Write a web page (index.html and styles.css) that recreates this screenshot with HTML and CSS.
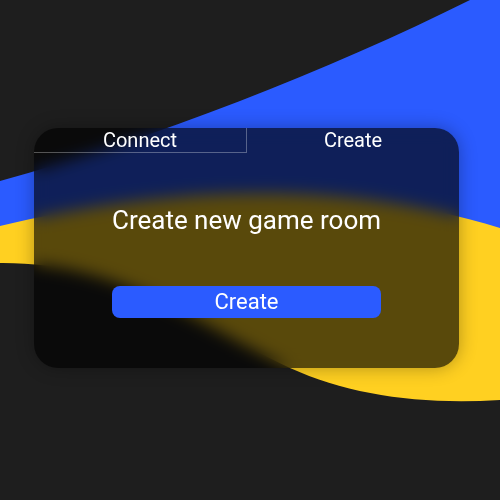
FILE: index.html
```html
<!DOCTYPE html>
<html lang="en">
<head>
<meta charset="utf-8">
<title>Game room</title>
<link rel="stylesheet" href="styles.css">
</head>
<body>
<svg class="backdrop" viewBox="0 0 500 500" preserveAspectRatio="none" aria-hidden="true">
  <path class="wave-blue" d="M0,181 C150,140 330,70 470,0 L500,0 L500,250 L0,250 Z"/>
  <path class="wave-yellow" d="M0,226 C150,190 330,175 500,228 L500,400 C420,405 350,395 290,368 C190,320 120,262 0,263 Z"/>
</svg>
<main class="page">
  <section class="card">
    <nav class="tabs">
      <button class="tab tab-inactive">Connect</button>
      <button class="tab tab-active">Create</button>
    </nav>
    <div class="card-body">
      <h1 class="title">Create new game room</h1>
      <button class="primary">Create</button>
    </div>
  </section>
</main>
</body>
</html>
```

FILE: styles.css
```css
html, body {
  margin: 0;
  padding: 0;
  height: 100%;
}
body {
  background: #1e1e1e;
  font-family: Roboto, "Liberation Sans", sans-serif;
  color: #fff;
  overflow: hidden;
}
.backdrop {
  position: fixed;
  top: 0;
  left: 0;
  width: 500px;
  height: 500px;
  z-index: 0;
}
.wave-blue { fill: #2b5bff; }
.wave-yellow { fill: #ffd021; }
.page {
  position: relative;
  z-index: 1;
  padding: 128px 0 0 34px;
}
.card {
  width: 425px;
  height: 240px;
  box-sizing: border-box;
  border-radius: 24px;
  overflow: hidden;
  background: rgba(0, 0, 0, 0.65);
  -webkit-backdrop-filter: blur(8px);
  backdrop-filter: blur(8px);
  box-shadow: 0 0 18px rgba(0, 0, 0, 0.3);
  display: flex;
  flex-direction: column;
}
.tabs {
  display: grid;
  grid-template-columns: 213px 1fr;
  height: 25px;
}
.tab {
  appearance: none;
  background: transparent;
  border: 0;
  border-bottom: 1px solid transparent;
  margin: 0;
  padding: 0;
  font-family: inherit;
  font-size: 20px;
  line-height: 24px;
  color: #fff;
  text-align: center;
  box-sizing: border-box;
  height: 25px;
}
.tab-inactive {
  border-right: 1px solid rgba(255, 255, 255, 0.3);
  border-bottom-color: rgba(255, 255, 255, 0.3);
}
.card-body {
  display: flex;
  flex-direction: column;
  align-items: center;
  padding-top: 52px;
  gap: 51px;
}
.title {
  margin: 0;
  font-size: 26px;
  font-weight: 400;
  line-height: 30px;
}
.primary {
  appearance: none;
  border: 0;
  margin: 0;
  width: 269px;
  height: 32px;
  border-radius: 8px;
  background: #2b5bff;
  color: #fff;
  font-family: inherit;
  font-size: 22px;
  line-height: 26px;
  padding: 3px 0;
}
```
